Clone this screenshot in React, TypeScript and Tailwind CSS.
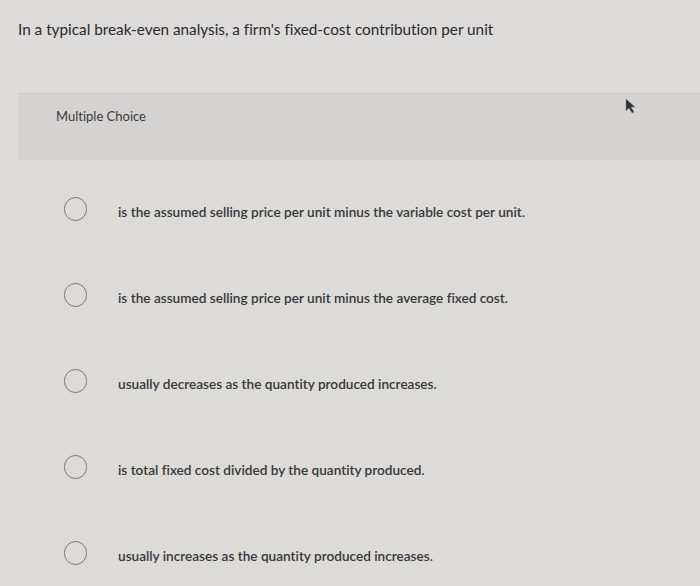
import React from "react";

const options = [
  "is the assumed selling price per unit minus the variable cost per unit.",
  "is the assumed selling price per unit minus the average fixed cost.",
  "usually decreases as the quantity produced increases.",
  "is total fixed cost divided by the quantity produced.",
  "usually increases as the quantity produced increases.",
];

export default function App() {
  return (
    <div
      className="w-[700px] h-[586px] overflow-hidden bg-[#dddbda] text-[#2f2f31] [font-variant-ligatures:none]"
      style={{ fontFamily: "Lato, 'Open Sans', sans-serif" }}
    >
      <div className="pl-[18px] pt-[19px] h-[93px] text-[15.3px] leading-[20px] text-[#2a2a2c]">
        In a typical break-even analysis, a firm's fixed-cost contribution per unit
      </div>
      <div className="ml-[18px] h-[493px] bg-[#dcdbd8] border-t border-[#cfcdcb]">
        <div className="relative h-[66px] bg-[#d4d3d1] pl-[38px] pt-[14px] text-[13px] leading-[16px] text-[#3b3b3e]">
          Multiple Choice
          <svg className="absolute left-[606px] top-[4px]" width="14" height="16" viewBox="0 0 14 16">
            <path d="M2 1 L2 13 L5 10 L8 15 L10 14 L7 9 L11 9 Z" fill="#2e2f35" stroke="#888" strokeWidth="0.5" />
          </svg>
        </div>
        <div className="flex flex-col pt-[6px]">
          {options.map((t, i) => (
            <div key={i} className="flex items-center h-[86px]">
              <div className="ml-[46px] w-[23px] h-[24px] rounded-full border-[1.5px] border-[#77777a] shrink-0" />
              <div className="ml-[31px] mt-[6px] text-[13.6px] font-semibold text-[#37373a]">{t}</div>
            </div>
          ))}
        </div>
      </div>
    </div>
  );
}
